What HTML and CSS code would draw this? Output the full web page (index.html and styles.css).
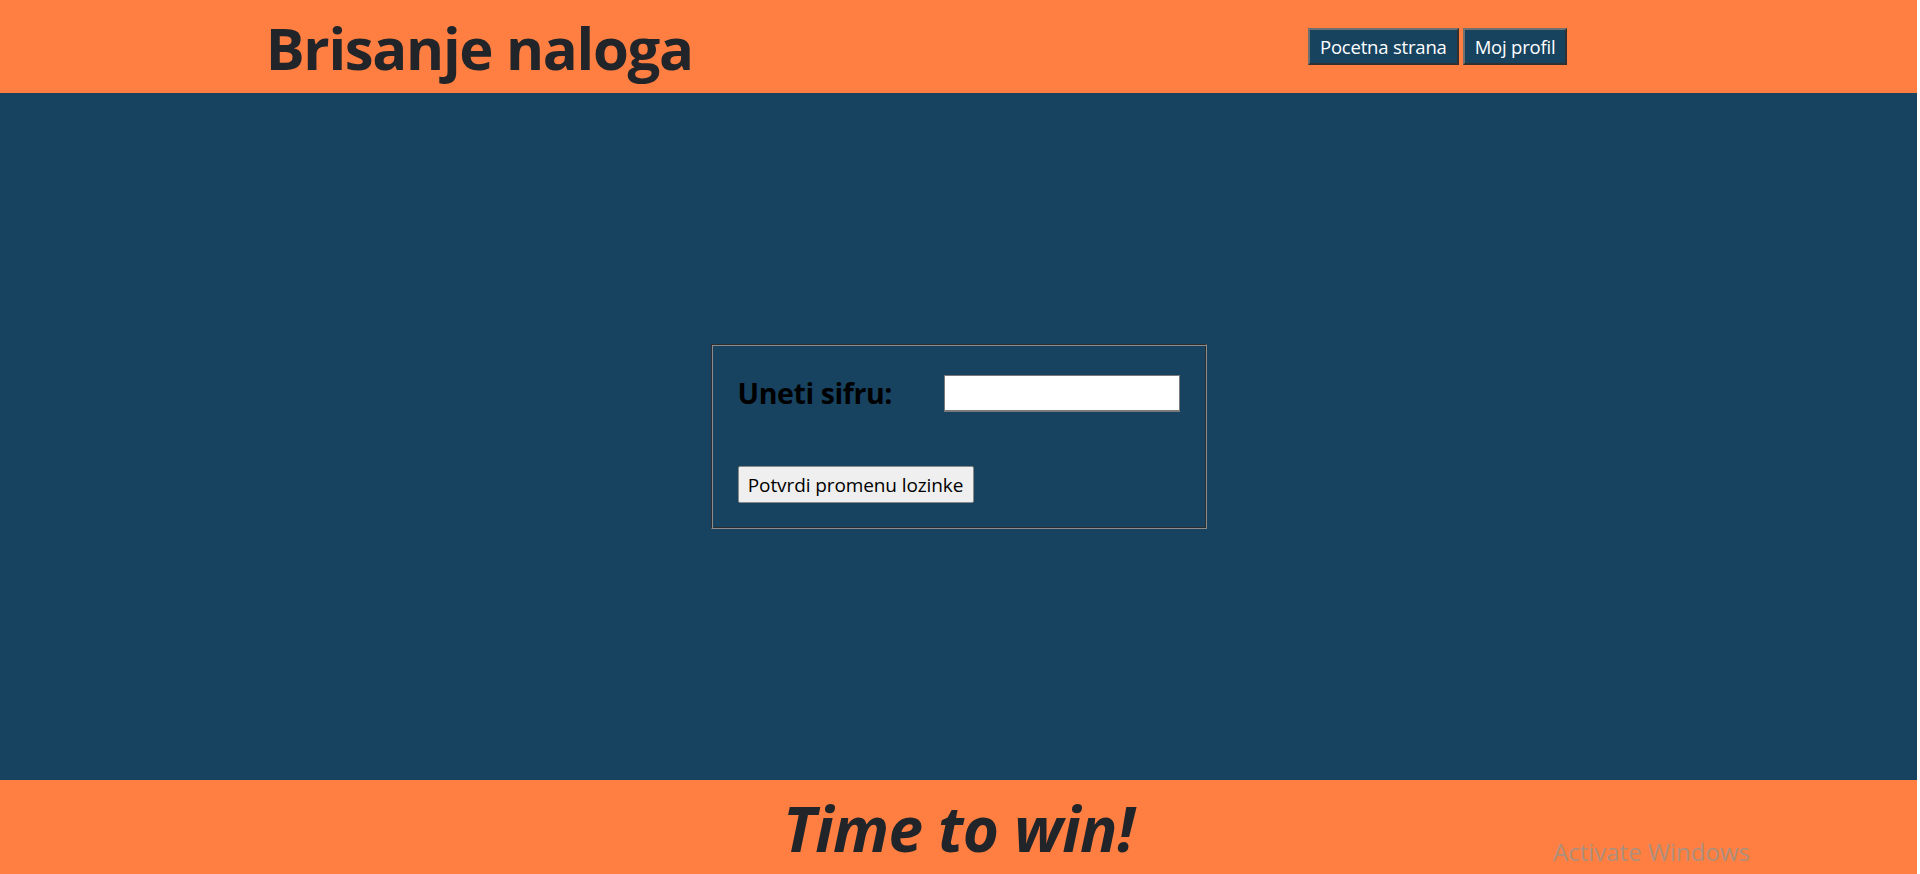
FILE: index.html
```html
<!DOCTYPE html>
<html lang="sr">
<head>
<meta charset="utf-8">
<title>Brisanje naloga</title>
<link rel="stylesheet" href="styles.css">
</head>
<body>
<div class="page">
  <header class="header">
    <div class="half">
      <h1 class="title">Brisanje naloga</h1>
    </div>
    <div class="half">
      <nav class="nav">
        <button class="nav-btn">Pocetna strana</button>
        <button class="nav-btn">Moj profil</button>
      </nav>
    </div>
  </header>
  <main class="main">
    <form class="box">
      <div class="row">
        <label class="label" for="pw">Uneti sifru:</label>
        <input class="input" id="pw" type="password">
      </div>
      <div class="actions">
        <button type="button" class="submit">Potvrdi promenu lozinke</button>
      </div>
    </form>
  </main>
  <footer class="footer">
    <h2 class="slogan">Time to win!</h2>
  </footer>
</div>
<div class="watermark">Activate Windows</div>
</body>
</html>
```

FILE: styles.css
```css
html, body {
  margin: 0;
  padding: 0;
  background: #ffffff;
}
body {
  font-family: "Open Sans", "Noto Sans", sans-serif;
  color: #212529;
  overflow: hidden;
}
.page {
  width: 1917px;
  height: 874px;
  display: flex;
  flex-direction: column;
}
.header {
  height: 93px;
  background: #ff7f42;
  display: flex;
  flex-shrink: 0;
}
.half {
  flex: 1;
  display: flex;
  justify-content: center;
  align-items: flex-start;
}
.title {
  margin: 0;
  margin-top: 10px;
  font-size: 58px;
  font-weight: 700;
  line-height: 76px;
  letter-spacing: -1.3px;
}
.nav {
  margin-top: 28px;
  display: flex;
  gap: 4px;
}
.nav-btn {
  height: 37px;
  padding: 0 10px;
  background: #17435f;
  color: #ffffff;
  font-family: "Open Sans", sans-serif;
  font-size: 18.5px;
  border: 2px solid;
  border-color: #707070 #303030 #303030 #707070;
  letter-spacing: -0.2px;
}
.main {
  flex: 1;
  background: #174361;
  display: flex;
  align-items: center;
  justify-content: center;
}
.box {
  box-sizing: border-box;
  width: 496px;
  height: 185px;
  border: 1px solid;
  border-color: #2e2e2e #8c8c8c #8c8c8c #2e2e2e;
  box-shadow: inset 1px 1px 0 #8c8c8c, inset -1px -1px 0 #2e2e2e;
  padding: 29px 26px 0 26px;
}
.row {
  display: flex;
  align-items: center;
  justify-content: space-between;
}
.label {
  color: #000000;
  font-size: 28.5px;
  font-weight: 700;
  letter-spacing: -0.4px;
}
.input {
  box-sizing: border-box;
  width: 236px;
  height: 37px;
  margin: 0;
  background: #ffffff;
  border: 1px solid #7a7a7a;
  border-bottom-width: 2px;
}
.actions {
  margin-top: 54px;
}
.submit {
  box-sizing: border-box;
  width: 236px;
  height: 37px;
  margin: 0;
  background: #efefef;
  border: 1px solid #8a8a8a;
  border-radius: 2px;
  color: #000000;
  font-family: "Open Sans", sans-serif;
  font-size: 19px;
  letter-spacing: -0.1px;
}
.footer {
  height: 94px;
  background: #ff7f42;
  display: flex;
  justify-content: center;
  flex-shrink: 0;
}
.slogan {
  margin: 0;
  margin-top: 10px;
  font-size: 62px;
  font-style: italic;
  font-weight: 700;
  line-height: 76px;
  letter-spacing: -0.6px;
}
.watermark {
  position: absolute;
  left: 1553px;
  top: 835px;
  font-family: "Open Sans", sans-serif;
  font-size: 24px;
  color: #ae8f7c;
  pointer-events: none;
}
```
